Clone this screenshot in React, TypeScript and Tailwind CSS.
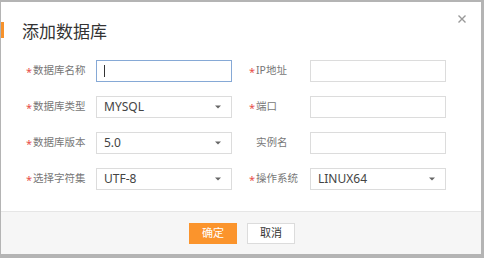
import React from "react";

const FONT = '"Noto Sans", "Noto Sans CJK SC", sans-serif';

type Field = {
  label: string;
  required: boolean;
  kind: "input" | "select";
  value?: string;
  focused?: boolean;
};

const FIELDS: Field[] = [
  { label: "数据库名称", required: true, kind: "input", focused: true },
  { label: "IP地址", required: true, kind: "input" },
  { label: "数据库类型", required: true, kind: "select", value: "MYSQL" },
  { label: "端口", required: true, kind: "input" },
  { label: "数据库版本", required: true, kind: "select", value: "5.0" },
  { label: "实例名", required: false, kind: "input" },
  { label: "选择字符集", required: true, kind: "select", value: "UTF-8" },
  { label: "操作系统", required: true, kind: "select", value: "LINUX64" },
];

function Caret() {
  return (
    <svg width="6" height="4" viewBox="0 0 6 4" className="ml-auto">
      <path d="M0 0.5 L6 0.5 L3 3.5 Z" fill="#666" />
    </svg>
  );
}

function FormField({ field, labelWidth }: { field: Field; labelWidth: string }) {
  return (
    <div className="flex items-center">
      <div className={`flex items-center ${labelWidth} text-[10.5px] text-[#777]`}>
        <span className={`w-[7px] text-[11px] leading-none ${field.required ? "text-[#e8504a]" : "text-transparent"}`}>*</span>
        <span>{field.label}</span>
      </div>
      <div
        className={`flex h-[22px] w-[136px] items-center border bg-white pl-[7px] pr-[10px] text-[12px] text-[#444] ${
          field.focused ? "border-[#86a9d6]" : "border-[#dcdcdc]"
        }`}
      >
        {field.focused && <span className="h-[12px] w-px bg-[#333]" />}
        {field.value && <span>{field.value}</span>}
        {field.kind === "select" && <Caret />}
      </div>
    </div>
  );
}

export default function App() {
  return (
    <div
      className="flex h-[258px] w-[484px] flex-col border-t-2 border-r-[3px] border-b-4 border-l border-[#b4b4b4] bg-white"
      style={{ fontFamily: FONT }}
    >
      {/* header */}
      <div className="relative pt-[20px] pl-[21px]">
        <span className="absolute left-0 top-[20px] h-[16px] w-[3px] bg-[#f7922b]" />
        <h1 className="text-[17px] leading-[20px] text-[#333]">添加数据库</h1>
        <button className="absolute right-[15px] top-[13px] p-0">
          <svg width="8" height="8" viewBox="0 0 8 8">
            <path d="M0.5 0.5 L7.5 7.5 M7.5 0.5 L0.5 7.5" stroke="#999" strokeWidth="1.4" />
          </svg>
        </button>
      </div>

      {/* form */}
      <div className="mt-[18px] grid grid-cols-[206px_197px] gap-x-[17px] gap-y-[14px] pl-[25px]">
        {FIELDS.map((f, i) => (
          <FormField key={f.label} field={f} labelWidth={i % 2 === 0 ? "w-[70px]" : "w-[61px]"} />
        ))}
      </div>

      {/* footer */}
      <div className="mt-[21px] flex flex-1 items-center justify-center gap-[10px] border-t border-[#e6e6e6] bg-[#f6f6f6] pl-[2px]">
        <button className="h-[21px] w-[48px] bg-[#fb942c] text-[11px] text-white">确定</button>
        <button className="h-[21px] w-[48px] border border-[#dcdcdc] bg-white text-[11px] text-[#333]">取消</button>
      </div>
    </div>
  );
}
